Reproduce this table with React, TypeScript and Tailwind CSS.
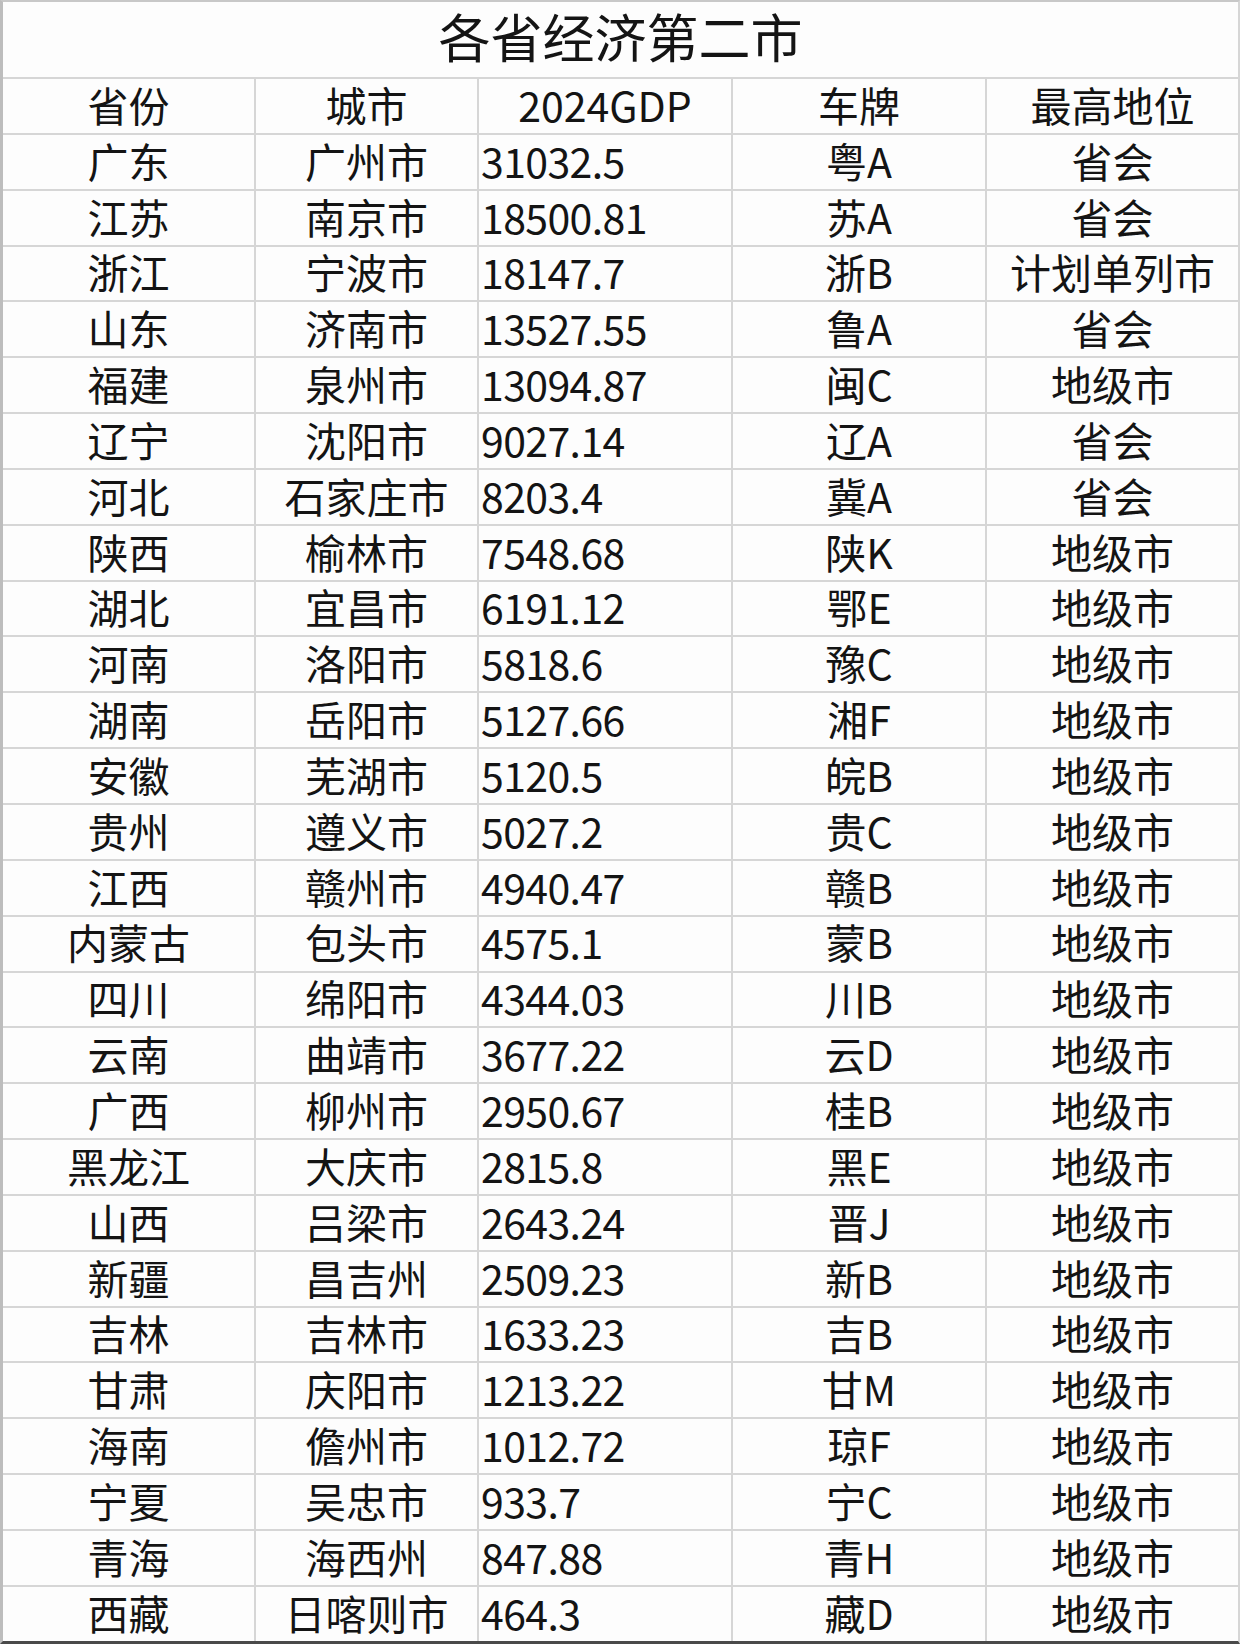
import React, { JSX } from "react";

type Row = [string, string, string, string, string];

const rows: Row[] = [
  ["广东", "广州市", "31032.5", "粤A", "省会"],
  ["江苏", "南京市", "18500.81", "苏A", "省会"],
  ["浙江", "宁波市", "18147.7", "浙B", "计划单列市"],
  ["山东", "济南市", "13527.55", "鲁A", "省会"],
  ["福建", "泉州市", "13094.87", "闽C", "地级市"],
  ["辽宁", "沈阳市", "9027.14", "辽A", "省会"],
  ["河北", "石家庄市", "8203.4", "冀A", "省会"],
  ["陕西", "榆林市", "7548.68", "陕K", "地级市"],
  ["湖北", "宜昌市", "6191.12", "鄂E", "地级市"],
  ["河南", "洛阳市", "5818.6", "豫C", "地级市"],
  ["湖南", "岳阳市", "5127.66", "湘F", "地级市"],
  ["安徽", "芜湖市", "5120.5", "皖B", "地级市"],
  ["贵州", "遵义市", "5027.2", "贵C", "地级市"],
  ["江西", "赣州市", "4940.47", "赣B", "地级市"],
  ["内蒙古", "包头市", "4575.1", "蒙B", "地级市"],
  ["四川", "绵阳市", "4344.03", "川B", "地级市"],
  ["云南", "曲靖市", "3677.22", "云D", "地级市"],
  ["广西", "柳州市", "2950.67", "桂B", "地级市"],
  ["黑龙江", "大庆市", "2815.8", "黑E", "地级市"],
  ["山西", "吕梁市", "2643.24", "晋J", "地级市"],
  ["新疆", "昌吉州", "2509.23", "新B", "地级市"],
  ["吉林", "吉林市", "1633.23", "吉B", "地级市"],
  ["甘肃", "庆阳市", "1213.22", "甘M", "地级市"],
  ["海南", "儋州市", "1012.72", "琼F", "地级市"],
  ["宁夏", "吴忠市", "933.7", "宁C", "地级市"],
  ["青海", "海西州", "847.88", "青H", "地级市"],
  ["西藏", "日喀则市", "464.3", "藏D", "地级市"],
];

function TableRow({ cells, header }: { cells: Row; header?: boolean }): JSX.Element {
  return (
    <div className="grid h-[55.85px] grid-cols-[253px_223px_254px_254px_1fr] border-t-2 border-[#d6d6d6]">
      <div className="flex items-center justify-center pb-[3px] border-r-2 border-[#d6d6d6]">{cells[0]}</div>
      <div className="flex items-center justify-center pb-[3px] border-r-2 border-[#d6d6d6]">{cells[1]}</div>
      <div
        className={
          header
            ? "flex items-center justify-center pb-[3px] border-r-2 border-[#d6d6d6]"
            : "flex items-center justify-start pl-[2px] pb-[3px] tracking-[-0.6px] border-r-2 border-[#d6d6d6]"
        }
      >
        {cells[2]}
      </div>
      <div className="flex items-center justify-center pb-[3px] border-r-2 border-[#d6d6d6]">{cells[3]}</div>
      <div className="flex items-center justify-center pb-[3px] whitespace-nowrap">{cells[4]}</div>
    </div>
  );
}

export default function App(): JSX.Element {
  return (
    <div
      className="box-border h-[1644px] w-[1240px] border-t-2 border-l-[3px] border-r-2 border-b-[3px] border-t-[#c8c8c8] border-l-[#bdbdbd] border-r-[#d6d6d6] border-b-[#4a4a4a] bg-[#fdfdfd] leading-[1.2] text-[#141414]"
      style={{ fontFamily: '"Noto Sans CJK SC", "Noto Sans", sans-serif' }}
    >
      {/* Title */}
      <h1 className="h-[75px] text-center text-[52px] font-normal leading-[68px]">各省经济第二市</h1>

      {/* Table */}
      <div className="text-[41px]">
        <TableRow header cells={["省份", "城市", "2024GDP", "车牌", "最高地位"]} />
        {rows.map((r) => (
          <TableRow key={r[0]} cells={r} />
        ))}
      </div>
    </div>
  );
}
